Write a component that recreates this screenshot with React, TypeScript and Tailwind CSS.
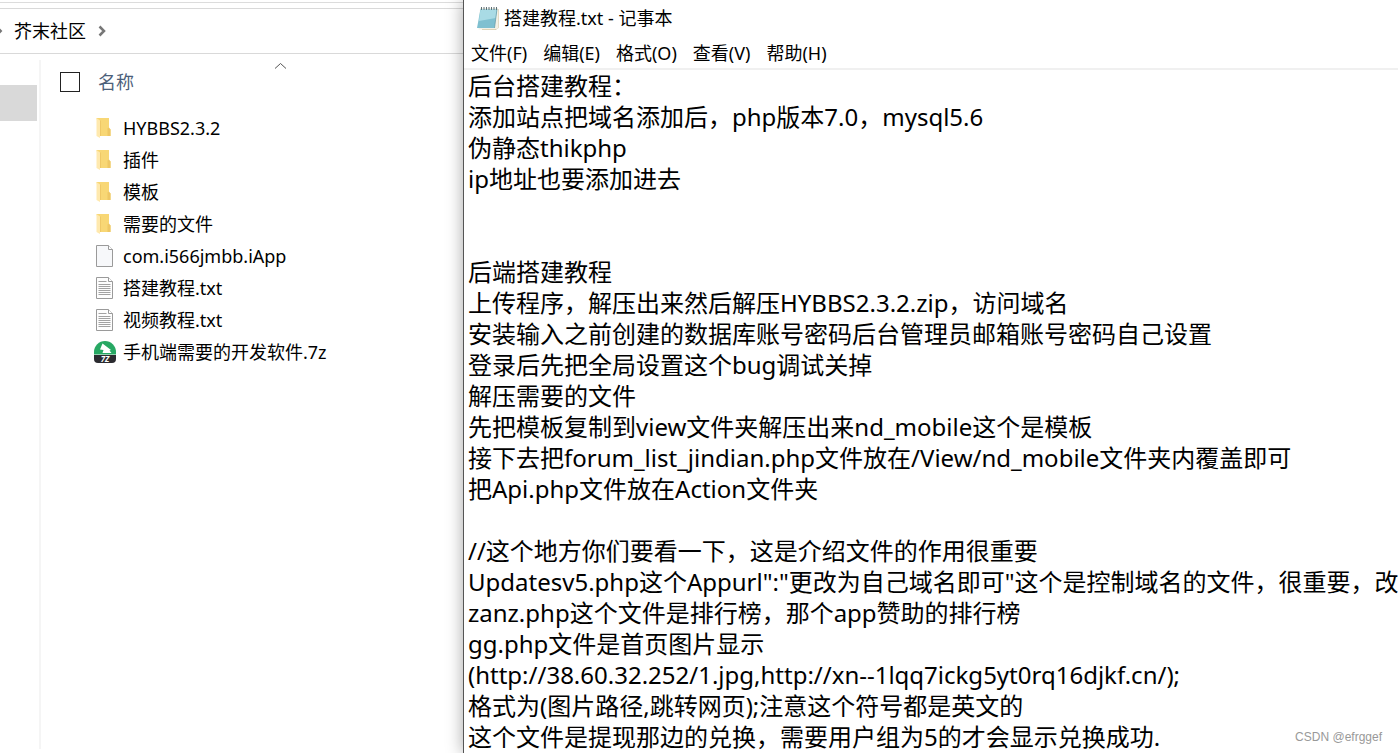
import { useState } from 'react'

type FileKind = 'folder' | 'blank' | 'text' | 'archive'

interface FileItem {
  name: string
  kind: FileKind
}

const files: FileItem[] = [
  { name: 'HYBBS2.3.2', kind: 'folder' },
  { name: '插件', kind: 'folder' },
  { name: '模板', kind: 'folder' },
  { name: '需要的文件', kind: 'folder' },
  { name: 'com.i566jmbb.iApp', kind: 'blank' },
  { name: '搭建教程.txt', kind: 'text' },
  { name: '视频教程.txt', kind: 'text' },
  { name: '手机端需要的开发软件.7z', kind: 'archive' },
]

const menus = ['文件(F)', '编辑(E)', '格式(O)', '查看(V)', '帮助(H)']

const initialText = `后台搭建教程：
添加站点把域名添加后，php版本7.0，mysql5.6
伪静态thikphp
ip地址也要添加进去


后端搭建教程
上传程序，解压出来然后解压HYBBS2.3.2.zip，访问域名
安装输入之前创建的数据库账号密码后台管理员邮箱账号密码自己设置
登录后先把全局设置这个bug调试关掉
解压需要的文件
先把模板复制到view文件夹解压出来nd_mobile这个是模板
接下去把forum_list_jindian.php文件放在/View/nd_mobile文件夹内覆盖即可
把Api.php文件放在Action文件夹

//这个地方你们要看一下，这是介绍文件的作用很重要
Updatesv5.php这个Appurl":"更改为自己域名即可"这个是控制域名的文件，很重要，改
zanz.php这个文件是排行榜，那个app赞助的排行榜
gg.php文件是首页图片显示
(http://38.60.32.252/1.jpg,http://xn--1lqq7ickg5yt0rq16djkf.cn/);
格式为(图片路径,跳转网页);注意这个符号都是英文的
这个文件是提现那边的兑换，需要用户组为5的才会显示兑换成功.`

function FolderIcon() {
  return (
    <svg className="h-6 w-6" viewBox="0 0 24 24">
      <path d="M3.500 2H16v10.500l1.500 1V20H7z" fill="#f8d775" />
      <path d="M14.500 12.500l1.500-1 1.500 2V20h-3z" fill="#eec765" />
      <path d="M3.500 2L7 4.500V22l-3.500-2z" fill="#ffe9ae" />
      <path d="M7.500 4.500V20" stroke="#efc867" />
    </svg>
  )
}

function PageIcon({ lined }: { lined?: boolean }) {
  return (
    <svg className="h-6 w-6" viewBox="0 0 24 24">
      <path d="M3.500 1.500h12l4 4v17h-16z" fill={lined ? '#fdfdfd' : '#f7f8fa'} stroke="#9a9a9a" />
      <path d="M15.500 1.500v4h4" fill="#fff" stroke="#9a9a9a" />
      {lined && (
        <path
          d="M5.500 5.500h8M5.500 8.500h12M5.500 10.500h12M5.500 12.500h12M5.500 14.500h12M5.500 16.500h12M5.500 18.500h12"
          stroke="#a2a2a2"
        />
      )}
    </svg>
  )
}

function ArchiveIcon() {
  return (
    <svg className="h-6 w-6" viewBox="0 0 24 24">
      <path d="M1 14.500V12a11 11 0 0 1 22 0v2.500z" fill="#27a863" />
      <path d="M9.500 3.500L7 9.500l3.500.5-1 3h9l-2-2.500 1.500-.5z" fill="#fff" />
      <path d="M1 15h22v4q0 4-4 4H5q-4 0-4-4z" fill="#2b2b30" />
      <text x="12" y="22" textAnchor="middle" fontSize="8" fontWeight="700" fontStyle="italic" fill="#fff">
        7Z
      </text>
    </svg>
  )
}

function NotepadIcon() {
  return (
    <svg className="h-6 w-6" viewBox="0 0 24 24">
      <path d="M5 3h17.500v19l-3 2H6z" fill="#c9b78a" />
      <path d="M4 2h18v20.500L19 23.500H2.500z" fill="#f3f1e6" />
      <path d="M4.500 3H21l-2.500 19H1z" fill="#7fc0d0" />
      <path d="M4.500 3H21l-1.200 9L3 15z" fill="#a9dbe5" />
      <path d="M18.500 22L21 3" stroke="#5f97a5" strokeWidth=".7" />
      <path d="M5.500 1v3M8 1v3M10.500 1v3M13 1v3M15.500 1v3M18 1v3M20.500 1v3" stroke="#5d6f75" />
    </svg>
  )
}

function FileIcon({ kind }: { kind: FileKind }) {
  if (kind === 'folder') return <FolderIcon />
  if (kind === 'archive') return <ArchiveIcon />
  return <PageIcon lined={kind === 'text'} />
}

function Explorer() {
  return (
    <section className="flex w-[463px] shrink-0 flex-col overflow-hidden text-lg">
      <div className="h-[3px] border-b border-[#dcdcdc]" />
      <nav className="mt-[5px] flex h-[46px] items-center border-y border-[#d9d9d9] text-black">
        <svg className="h-3 w-[14px]" viewBox="0 0 14 12" fill="none">
          <path d="M-3 2l4 4-4 4" stroke="#777" strokeWidth="2" />
        </svg>
        <a href="#">芥末社区</a>
        <svg className="ml-3 h-3 w-3" viewBox="0 0 12 12" fill="none">
          <path d="M1.500 1.500L6 6l-4.500 4.500" stroke="#777" strokeWidth="2.500" />
        </svg>
      </nav>
      <div className="flex min-h-0 flex-1">
        <div className="mt-[6px] mb-1 w-[41px] shrink-0 border-r-2 border-[#f5f5f5]">
          <div className="mt-[25px] h-9 w-[37px] bg-[#d9d9d9]" />
        </div>
        <div className="min-w-0 flex-1">
          <div className="relative flex h-14 items-center pl-[19px]">
            <input
              id="all"
              type="checkbox"
              className="h-5 w-5 appearance-none border border-[#222] bg-white checked:bg-[#0078d7]"
            />
            <label htmlFor="all" className="ml-[18px] text-[#4c607a]">名称</label>
            <svg className="absolute top-2 left-[233px] h-2 w-3" viewBox="0 0 12 8" fill="none">
              <path d="M1 6.500L6.500 1.500 12 6.500" stroke="#555" />
            </svg>
          </div>
          <ul className="mt-[2px]">
            {files.map((file) => (
              <li key={file.name} className="flex h-8 items-center pl-[52px]">
                <FileIcon kind={file.kind} />
                <span className="ml-[6px] whitespace-nowrap">{file.name}</span>
              </li>
            ))}
          </ul>
        </div>
      </div>
    </section>
  )
}

function Notepad() {
  const [text, setText] = useState(initialText)

  return (
    <section className="relative flex min-w-0 flex-1 flex-col border-l border-[#555] bg-white shadow-[0_0_16px_rgba(0,0,0,0.35)]">
      <header className="flex h-[35px] items-center pl-3 text-lg">
        <NotepadIcon />
        <h1 className="ml-1">搭建教程.txt - 记事本</h1>
      </header>
      <div className="flex h-[35px] items-center gap-4 border-b-2 border-[#f0f0f0] pt-[3px] pl-[7px] text-lg">
        {menus.map((menu) => (
          <button key={menu} className="whitespace-nowrap">{menu}</button>
        ))}
      </div>
      <textarea
        aria-label="搭建教程.txt"
        wrap="off"
        spellCheck={false}
        value={text}
        onChange={(e) => setText(e.target.value)}
        className="min-h-0 flex-1 resize-none overflow-hidden pl-1 text-2xl leading-[31px] whitespace-pre outline-none"
      />
      <span className="absolute right-4 bottom-2 font-['Liberation_Sans'] text-xs text-[#999]">CSDN @efrggef</span>
    </section>
  )
}

export default function App() {
  return (
    <main className="flex h-screen overflow-hidden bg-white font-['Noto_Sans','Noto_Sans_CJK_SC',sans-serif] text-black">
      <Explorer />
      <Notepad />
    </main>
  )
}
